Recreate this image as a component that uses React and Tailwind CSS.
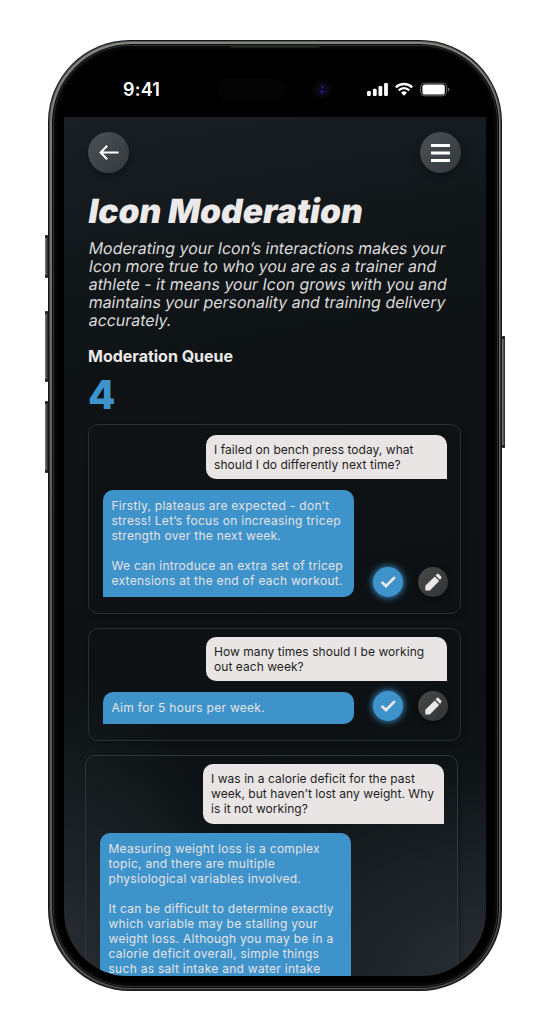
import React from "react";

function ArrowIcon() {
  return (
    <svg width="20" height="16" viewBox="0 0 20 16" fill="none" stroke="#fff" strokeWidth="2">
      <path d="M19.5 7.5H1.8M8.2 .7L1.6 7.5l6.6 6.8" />
    </svg>
  );
}

function MenuIcon() {
  return (
    <svg width="19" height="18" viewBox="0 0 19 18" fill="#fff">
      <rect y="0" width="19" height="3" />
      <rect y="7.5" width="19" height="3" />
      <rect y="15" width="19" height="3" />
    </svg>
  );
}

function CheckIcon() {
  return (
    <svg width="16" height="12" viewBox="0 0 16 12" fill="none" stroke="#ebe7e7" strokeWidth="2.7">
      <path d="M1.7 5.9l4.3 4.1L14.9 1.1" />
    </svg>
  );
}

function PencilIcon() {
  return (
    <svg width="17" height="18" viewBox="0 0 17 18" fill="#ebe7e7">
      <path d="M0.3 17.4v-4.6L9.7 3.4l4.5 4.5-9.4 9.5z" />
      <path d="M10.6 2.4l1.6-1.6q.6-.6 1.2 0l2.9 3q.6.6 0 1.2l-1.2 1.9z" />
    </svg>
  );
}

function StatusIcons() {
  return (
    <svg className="block" width="84" height="16" viewBox="0 0 84 16" fill="#fff">
      <rect x="0" y="9" width="3.8" height="5" rx="1.2" />
      <rect x="5.9" y="6.7" width="3.8" height="7.3" rx="1.2" />
      <rect x="11.5" y="4" width="3.8" height="10" rx="1.2" />
      <rect x="17.1" y="1" width="3.8" height="13" rx="1.2" />
      <g fill="none" stroke="#fff" strokeWidth="2.3">
        <path d="M28.8 5.4a11.6 11.6 0 0 1 16.4 0" />
        <path d="M31.7 8.4a7.5 7.5 0 0 1 10.6 0" />
      </g>
      <path d="M37 13.8l-3-3a4.3 4.3 0 0 1 6 0z" />
      <rect x="53.6" y="1.2" width="26" height="12.6" rx="4" fill="none" stroke="#6b6b6b" />
      <rect x="55.4" y="2.5" width="22.4" height="10" rx="2.6" />
      <path d="M80.8 5.5q1.6.6 1.6 2t-1.6 2z" fill="#777" />
    </svg>
  );
}

function RoundButton({ children }) {
  return (
    <button className="flex h-[41px] w-[41px] items-center justify-center rounded-full bg-linear-to-br from-[#4b5155] to-[#33383b] shadow-[0_3px_6px_rgba(0,0,0,0.35)]">
      {children}
    </button>
  );
}

function Actions() {
  return (
    <div className="flex gap-[15px]">
      <button className="flex h-[30px] w-[30px] items-center justify-center rounded-full bg-[#3f93cb] shadow-[0_0_6px_1px_#3585bd]">
        <CheckIcon />
      </button>
      <button className="flex h-[30px] w-[30px] items-center justify-center rounded-full bg-linear-to-br from-[#484848] to-[#303334] shadow-[0_2px_5px_rgba(0,0,0,0.5)]">
        <PencilIcon />
      </button>
    </div>
  );
}

function Question({ lines, className = "" }) {
  return (
    <div className={"ml-auto w-[241px] rounded-[10px] rounded-br-none bg-[#e9e5e4] px-2 py-[7px] text-[12px] leading-[15px] tracking-[0.05px] whitespace-nowrap text-[#1d1d1d] " + className}>
      {lines.map((l) => (
        <p key={l}>{l}</p>
      ))}
    </div>
  );
}

function Answer({ lines }) {
  return (
    <div className="w-[251px] shrink-0 rounded-[10px] rounded-bl-none bg-[#3f93cb] px-[8.5px] pt-[8px] pb-[9px] text-[12px] leading-[15px] tracking-[0.28px] whitespace-nowrap text-[#e5e3e4]">
      {lines.map((l, i) => (
        <p key={i} className="h-[15px]">{l}</p>
      ))}
    </div>
  );
}

const INTRO = [
  "Moderating your Icon’s interactions makes your",
  "Icon more true to who you are as a trainer and",
  "athlete - it means your Icon grows with you and",
  "maintains your personality and training delivery",
  "accurately.",
];

function Screen() {
  return (
    <div className="flex h-[859px] w-[422px] flex-col overflow-hidden rounded-b-[64px] bg-[radial-gradient(ellipse_300px_220px_at_100%_100%,#272d32_0%,transparent_100%),radial-gradient(ellipse_180px_300px_at_0%_100%,#272d32_0%,transparent_100%),linear-gradient(170deg,#191f23_0%,#12171a_16%,#0e1214_30%,#0d1113_70%,#13181b_100%)] px-6 pt-[15px]">
      <div className="flex w-[373px] justify-between">
        <RoundButton><ArrowIcon /></RoundButton>
        <RoundButton><MenuIcon /></RoundButton>
      </div>
      <h1 className="mt-[17px] -ml-px origin-[0_80%] -skew-x-[9.4deg] text-[33.5px] leading-[42px] font-black tracking-[0.02px] whitespace-nowrap text-[#ebe9e9]">Icon Moderation</h1>
      <div className="mt-[7px] -ml-[0.5px] text-[16px] leading-[18.1px] font-normal tracking-[-0.02px] whitespace-nowrap text-[#dcdada]">
        {INTRO.map((l) => (
          <p key={l} className="origin-[0_80%] -skew-x-[9.4deg]">{l}</p>
        ))}
      </div>
      <h2 className="mt-[15px] text-[16px] leading-[24px] font-bold text-[#ebe9e9]">Moderation Queue</h2>
      <div className="mt-[5px] h-[43px] text-[40px] leading-[44px] font-extrabold text-[#3f93cb]">4</div>

      <section className="mt-[8px] h-[190px] w-[373px] shrink-0 rounded-[10px] border border-[#292e31] pt-[10px] pr-[13px] pl-[14px] shadow-[2px_3px_5px_rgba(0,0,0,0.2)]">
        <Question lines={["I failed on bench press today, what", "should I do differently next time?"]} />
        <div className="mt-[11px] -mr-[1px] flex items-end justify-between">
          <Answer lines={["Firstly, plateaus are expected - don’t", "stress! Let’s focus on increasing tricep", "strength over the next week.", "", "We can introduce an extra set of tricep", "extensions at the end of each workout."]} />
          <Actions />
        </div>
      </section>

      <section className="mt-[14px] h-[113px] w-[373px] shrink-0 rounded-[10px] border border-[#292e31] pt-[8px] pr-[13px] pl-[14px] shadow-[2px_3px_5px_rgba(0,0,0,0.2)]">
        <Question lines={["How many times should I be working", "out each week?"]} />
        <div className="mt-[11px] -mr-[1px] flex items-start justify-between">
          <Answer lines={["Aim for 5 hours per week."]} />
          <div className="-mt-px"><Actions /></div>
        </div>
      </section>

      <section className="mt-[14px] -ml-[3px] h-[260px] w-[373px] shrink-0 rounded-[10px] border border-[#30363a] pt-[8px] pr-[13px] pl-[14px] shadow-[2px_3px_5px_rgba(0,0,0,0.2)]">
        <Question className="min-h-[60px]" lines={["I was in a calorie deficit for the past", "week, but haven’t lost any weight. Why", "is it not working?"]} />
        <div className="mt-[9px]">
          <Answer lines={["Measuring weight loss is a complex", "topic, and there are multiple", "physiological variables involved.", "", "It can be difficult to determine exactly", "which variable may be stalling your", "weight loss. Although you may be in a", "calorie deficit overall, simple things", "such as salt intake and water intake"]} />
        </div>
      </section>
    </div>
  );
}

function SideKey({ className }) {
  return <div className={"w-full rounded-[1px] border-y-[3px] border-[#222] bg-linear-to-r from-[#8a8a86] to-[#222] " + className} />;
}

export default function App() {
  return (
    <div className="flex h-[1030px] w-[549px] overflow-hidden bg-white pt-10 pl-[45px] font-['Inter',sans-serif]">
      <div className="w-[3px] pt-[195px]">
        <SideKey className="h-[43px]" />
        <SideKey className="mt-[33px] h-[71px]" />
        <SideKey className="mt-[19px] h-[72px]" />
      </div>
      <div className="h-[951px] w-[454px] rounded-[82px] bg-[#161616] p-px">
        <div className="h-full rounded-[81px] bg-linear-to-b from-[#555a53] via-[#2a2a2a] to-[#2c2c2c] p-px">
          <div className="h-full rounded-[80px] bg-linear-to-b from-[#80857e] via-[#5e5e5e] to-[#5a5a5a] p-[1.5px]">
            <div className="h-full rounded-[79px] bg-[#0c0c0c] p-px">
              <div className="h-full rounded-[78px] bg-[#2e2e2e] p-px">
                <div className="flex h-full flex-col items-center overflow-hidden rounded-[77px] bg-black shadow-[inset_0_0_5px_#1a1a1a]">
                  <div className="flex h-[71.5px] w-full shrink-0 flex-col">
                    <div className="mx-auto h-[2px] w-[90px] rounded-b-sm bg-[#202220]" />
                    <div className="flex pt-[30px] pl-[69.5px]">
                      <div className="w-[94px] text-[18px] leading-[23px] font-semibold tracking-[0.2px] text-white">9:41</div>
                      <div className="h-[23px] w-[68px] rounded-full bg-[#040404]" />
                      <div className="ml-[27px] flex h-[20px] w-[20px] items-center justify-center self-center rounded-full bg-[#070507]">
                        <div className="flex h-[11px] w-[11px] flex-col items-center justify-center gap-[2px] rounded-full border border-[#12122b] bg-[#080820]">
                          <div className="h-[2px] w-[3px] rounded-full bg-[#22245f]" />
                          <div className="h-[3px] w-[4px] rounded-full bg-[#1b1c75]" />
                        </div>
                      </div>
                      <div className="ml-[35px] pt-[4px]"><StatusIcons /></div>
                    </div>
                  </div>
                  <Screen />
                </div>
              </div>
            </div>
          </div>
        </div>
      </div>
      <div className="w-[3px] pt-[296px]">
        <SideKey className="h-[112px]" />
      </div>
    </div>
  );
}
